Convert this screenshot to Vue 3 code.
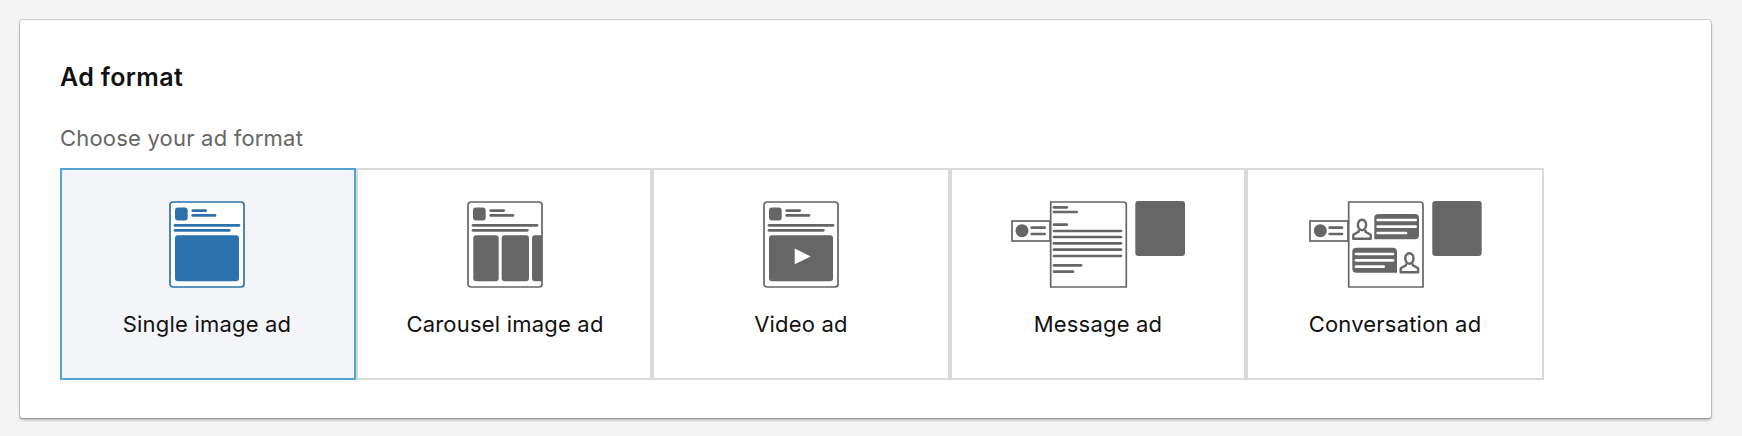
<script setup>
const avatarLines = [
  [23.7, 9.6, 36.7],
  [23.7, 14.4, 46],
  [6, 24.3, 70],
  [6, 29.3, 60.3]
]
const messageLines = [
  [43, 6.3, 55.7],
  [43, 11, 65.7],
  [43, 23.7, 55.7],
  [43, 30, 110],
  [43, 36, 110],
  [43, 42.3, 110],
  [43, 48.7, 110],
  [43, 55, 110],
  [43, 64.3, 70],
  [43, 70.7, 62]
]
const bubbleLines = [
  [68.7, 19, 106.7],
  [68.7, 25.7, 106.7],
  [68.7, 32, 97],
  [47, 53, 84],
  [47, 59.3, 84],
  [47, 65.7, 74.7]
]
const person = "M6.3 11.2 V13 L1 16 V20 H18.4 V16 L13.1 13 V11.2 M9.7 1 C12.2 1 13.8 3.2 13.8 6.2 C13.8 9 12 11.6 9.7 11.6 C7.4 11.6 5.6 9 5.6 6.2 C5.6 3.2 7.2 1 9.7 1 Z"
</script>

<template>
  <div class="page">
    <section class="card">
      <h2 class="title">Ad format</h2>
      <p class="subtitle">Choose your ad format</p>
      <div class="tiles">
        <button class="tile selected">
          <svg width="76" height="87" viewBox="0 0 76 87">
            <rect x="1" y="1" width="74" height="85" rx="3" class="frame" />
            <rect x="6" y="6.5" width="12.7" height="13" rx="3" class="solid" />
            <line v-for="l in avatarLines" :key="l[1]" :x1="l[0]" :y1="l[1]" :x2="l[2]" :y2="l[1]" class="bar" />
            <rect x="6" y="34.3" width="64" height="46" rx="3" class="solid" />
          </svg>
          <span class="label">Single image ad</span>
        </button>

        <button class="tile nudged">
          <svg width="76" height="87" viewBox="0 0 76 87">
            <rect x="1" y="1" width="74" height="85" rx="3" class="frame" />
            <rect x="6.3" y="34.3" width="25.4" height="46" rx="3" class="solid" />
            <rect x="34.7" y="34.3" width="27.3" height="46" rx="3" class="solid" />
            <path d="M75 34.3 H68 a3 3 0 0 0 -3 3 V77.3 a3 3 0 0 0 3 3 H75 Z" class="solid" />
            <rect x="6" y="6.5" width="12.7" height="13" rx="3" class="solid" />
            <line v-for="l in avatarLines" :key="l[1]" :x1="l[0]" :y1="l[1]" :x2="l[2]" :y2="l[1]" class="bar" />
          </svg>
          <span class="label">Carousel image ad</span>
        </button>

        <button class="tile wide">
          <svg width="76" height="87" viewBox="0 0 76 87">
            <rect x="1" y="1" width="74" height="85" rx="3" class="frame" />
            <rect x="6" y="6.5" width="12.7" height="13" rx="3" class="solid" />
            <line v-for="l in avatarLines" :key="l[1]" :x1="l[0]" :y1="l[1]" :x2="l[2]" :y2="l[1]" class="bar" />
            <rect x="6" y="34.3" width="64" height="46" rx="3" class="solid" />
            <path d="M31.7 47.6 L47.7 55.5 L31.7 63.3 Z" fill="#fff" />
          </svg>
          <span class="label">Video ad</span>
        </button>

        <button class="tile">
          <svg width="174" height="87" viewBox="0 0 174 87">
            <rect x="1" y="20" width="38" height="20" class="frame" />
            <circle cx="11" cy="29.7" r="6.5" class="solid" />
            <line x1="20.7" y1="26.7" x2="33.7" y2="26.7" class="bar" />
            <line x1="20.7" y1="33" x2="33.7" y2="33" class="bar" />
            <path d="M39.7 1 H112.3 a3 3 0 0 1 3 3 V86 H39.7 Z" class="frame" />
            <line v-for="l in messageLines" :key="l[1]" :x1="l[0]" :y1="l[1]" :x2="l[2]" :y2="l[1]" class="bar" />
            <rect x="124.3" y="0" width="49.7" height="55" rx="3" class="solid" />
          </svg>
          <span class="label">Message ad</span>
        </button>

        <button class="tile wide">
          <svg width="173" height="87" viewBox="0 0 173 87">
            <rect x="1" y="20" width="38" height="20" class="frame" />
            <circle cx="11.3" cy="29.7" r="6.5" class="solid" />
            <line x1="20.7" y1="26.7" x2="33" y2="26.7" class="bar" />
            <line x1="20.7" y1="33" x2="33" y2="33" class="bar" />
            <path d="M39.7 1 H111 a3 3 0 0 1 3 3 V86 H39.7 Z" class="frame" />
            <path d="M65.3 38.3 V17 a4 4 0 0 1 4 -4 H106 a4 4 0 0 1 4 4 V34.3 a4 4 0 0 1 -4 4 Z" class="solid" />
            <path d="M88 71.7 H47.3 a4 4 0 0 1 -4 -4 V50.7 a4 4 0 0 1 4 -4 H84 a4 4 0 0 1 4 4 Z" class="solid" />
            <line v-for="l in bubbleLines" :key="l[1]" :x1="l[0]" :y1="l[1]" :x2="l[2]" :y2="l[1]" class="bar light" />
            <path :d="person" transform="translate(43.3 17.7)" class="outline" />
            <path :d="person" transform="translate(90.7 51.2)" class="outline" />
            <rect x="123.3" y="0" width="49.4" height="55" rx="3" class="solid" />
          </svg>
          <span class="label">Conversation ad</span>
        </button>
      </div>
    </section>
  </div>
</template>

<style scoped>
.page {
  padding: 20px 31px 18px 20px;
}

.card {
  height: 398px;
  box-sizing: border-box;
  padding: 43px 40px 0;
  background: #fff;
  border-radius: 3px;
  box-shadow: 0 0 0 1px rgba(0, 0, 0, 0.15), 0 2px 3px rgba(0, 0, 0, 0.3);
}

.title {
  margin: 0;
  font: 600 25px/28px Inter, "Liberation Sans", sans-serif;
  letter-spacing: 0.35px;
  color: #111;
}

.subtitle {
  margin: 33px 0 0;
  font: 400 22px/28px Inter, "Liberation Sans", sans-serif;
  letter-spacing: 0.2px;
  color: #666;
}

.tiles {
  display: flex;
  margin-top: 16px;
}

.tile {
  display: flex;
  flex-direction: column;
  align-items: center;
  width: 296px;
  height: 212px;
  padding: 31px 0 0;
  box-sizing: border-box;
  background: #fff;
  border: 2px solid #d9d9d9;
  color: #666;
  font-family: inherit;
}

.tile.wide {
  width: 298px;
}

.tile.nudged {
  padding-left: 2px;
}

.tile.selected {
  padding-right: 2px;
  background: #f3f5f8;
  border-color: #55a5d4;
  color: #2a71ad;
}

.label {
  margin-top: 22px;
  font: 400 22px/28px Inter, "Liberation Sans", sans-serif;
  letter-spacing: 0.2px;
  color: #111;
}

.frame {
  fill: #fff;
  stroke: currentColor;
  stroke-width: 1.7;
}

.solid {
  fill: currentColor;
}

.bar {
  stroke: currentColor;
  stroke-width: 2.7;
  stroke-linecap: round;
}

.bar.light {
  stroke: #fff;
}

.outline {
  fill: none;
  stroke: currentColor;
  stroke-width: 2.4;
  stroke-linejoin: round;
}
</style>

<style>
body {
  background: #f4f4f4;
}
</style>
